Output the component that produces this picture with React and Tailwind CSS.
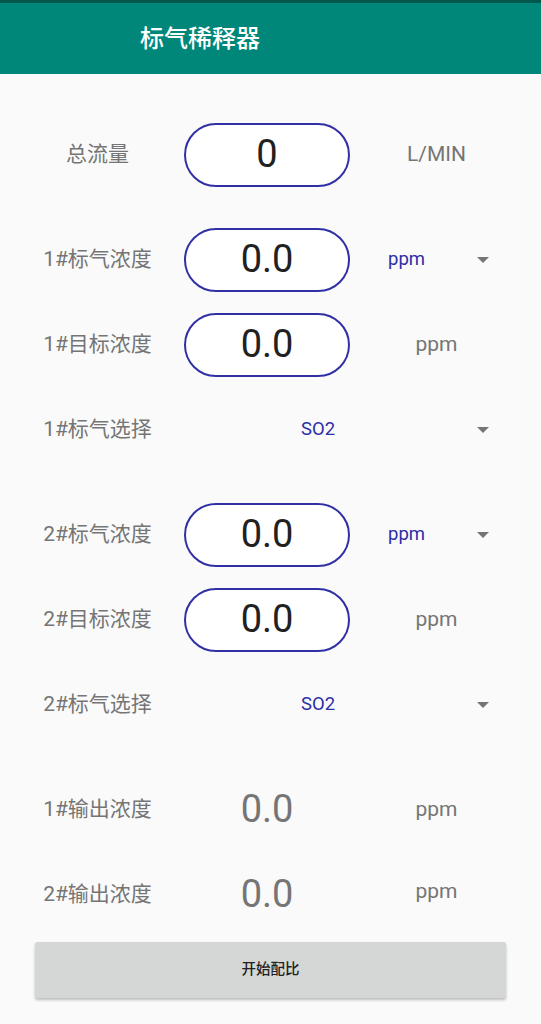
import React from "react";

const font = { fontFamily: 'Roboto, "Noto Sans CJK SC", sans-serif' };

function Arrow() {
    return (
        <svg width="12" height="6" viewBox="0 0 12 6" className="mr-[52px] shrink-0">
            <path d="M0 0 L12 0 L6 6 Z" fill="#757575" />
        </svg>
    );
}

function Label({ children }) {
    return (
        <div className="w-[184px] shrink-0 pl-[11px] text-center text-[21px] text-[#757575]">
            {children}
        </div>
    );
}

function ValueBox({ value }) {
    return (
        <div className="w-[166px] h-[64px] shrink-0 rounded-full border-2 border-[#3030a4] bg-white flex items-center justify-center text-[38px] text-[#212121]">
            {value}
        </div>
    );
}

function Unit({ children }) {
    return (
        <div className="flex-1 pr-[18px] text-center text-[21px] text-[#757575]">
            {children}
        </div>
    );
}

function InputRow({ label, value, unit }) {
    return (
        <div className="h-[85px] flex items-center">
            <Label>{label}</Label>
            <ValueBox value={value} />
            <Unit>{unit}</Unit>
        </div>
    );
}

function SpinnerRow({ label, value }) {
    return (
        <div className="h-[85px] flex items-center">
            <Label>{label}</Label>
            <ValueBox value={value} />
            <div className="flex-1 flex items-center">
                <span className="pl-[38px] text-[18.5px] text-[#2e2ea6]">ppm</span>
                <div className="flex-1" />
                <Arrow />
            </div>
        </div>
    );
}

function SelectRow({ label }) {
    return (
        <div className="h-[85px] flex items-center">
            <Label>{label}</Label>
            <div className="flex-1 flex items-center">
                <span className="w-[268px] text-center text-[18.5px] text-[#2e2ea6]">SO2</span>
                <div className="flex-1" />
                <Arrow />
            </div>
        </div>
    );
}

function OutputRow({ label, value, unitClass }) {
    return (
        <div className="h-[85px] flex items-center">
            <Label>{label}</Label>
            <div className="w-[166px] shrink-0 text-center text-[38px] text-[#757575]">{value}</div>
            <div className={"flex-1 pr-[18px] text-center text-[21px] text-[#757575] " + unitClass}>ppm</div>
        </div>
    );
}

export default function App() {
    return (
        <div style={font} className="w-[541px] h-[1024px] bg-[#fafafa] overflow-hidden flex flex-col">
            <div className="h-[3px] bg-[#00574b]" />
            <div className="h-[71px] bg-[#00877a] flex items-center pl-[140px]">
                <span className="text-white text-[24px] font-medium">标气稀释器</span>
            </div>

            <div className="pt-[38px] flex flex-col">
                <InputRow label="总流量" value="0" unit="L/MIN" />

                <div className="mt-[20px]">
                    <SpinnerRow label="1#标气浓度" value="0.0" />
                    <InputRow label="1#目标浓度" value="0.0" unit="ppm" />
                    <SelectRow label="1#标气选择" />
                </div>

                <div className="mt-[20px]">
                    <SpinnerRow label="2#标气浓度" value="0.0" />
                    <InputRow label="2#目标浓度" value="0.0" unit="ppm" />
                    <SelectRow label="2#标气选择" />
                </div>

                <div className="mt-[20px]">
                    <OutputRow label="1#输出浓度" value="0.0" unitClass="" />
                    <OutputRow label="2#输出浓度" value="0.0" unitClass="-mt-[6px]" />
                </div>

                <div className="px-[35px] mt-[5px]">
                    <button className="w-full h-[56px] bg-[#d5d7d6] rounded-[2px] shadow-[0_2px_3px_rgba(0,0,0,0.25)] text-[14.5px] font-medium text-[#212121]">
                        开始配比
                    </button>
                </div>
            </div>
        </div>
    );
}
